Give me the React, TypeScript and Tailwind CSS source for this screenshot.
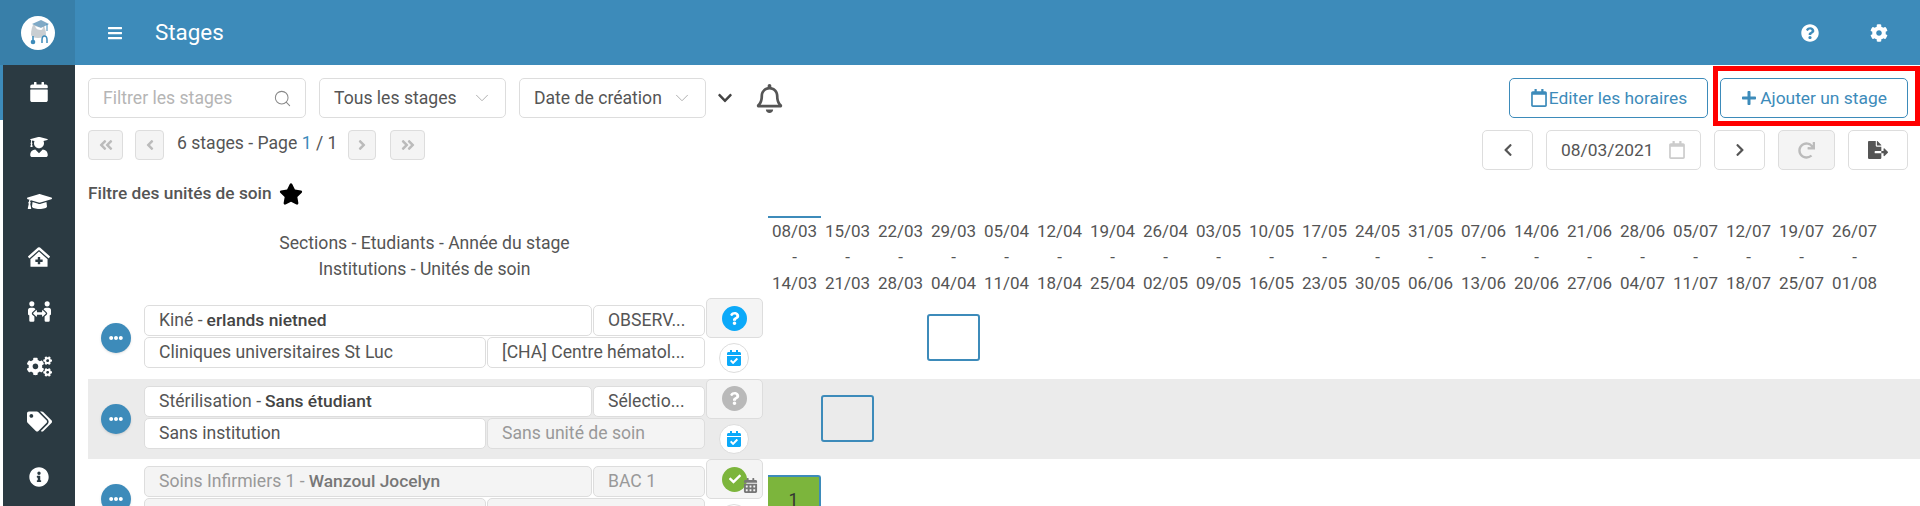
import type { ReactNode } from "react";
import { ChevronDown, Search } from "lucide-react";
import {
  FaAngleDoubleLeft,
  FaAngleDoubleRight,
  FaAngleLeft,
  FaAngleRight,
  FaBars,
  FaCalendar,
  FaCalendarAlt,
  FaCalendarCheck,
  FaCheck,
  FaChevronDown,
  FaChevronLeft,
  FaChevronRight,
  FaClinicMedical,
  FaCog,
  FaCogs,
  FaEllipsisH,
  FaFileExport,
  FaGraduationCap,
  FaInfoCircle,
  FaPeopleArrows,
  FaPlus,
  FaQuestion,
  FaQuestionCircle,
  FaRedo,
  FaRegBell,
  FaRegCalendar,
  FaStar,
  FaTags,
  FaUserGraduate,
} from "react-icons/fa";

const starts = ["08/03", "15/03", "22/03", "29/03", "05/04", "12/04", "19/04", "26/04", "03/05", "10/05", "17/05", "24/05", "31/05", "07/06", "14/06", "21/06", "28/06", "05/07", "12/07", "19/07", "26/07"];
const ends = ["14/03", "21/03", "28/03", "04/04", "11/04", "18/04", "25/04", "02/05", "09/05", "16/05", "23/05", "30/05", "06/06", "13/06", "20/06", "27/06", "04/07", "11/07", "18/07", "25/07", "01/08"];

const sideIcons = [
  { Icon: FaCalendar, size: 20 },
  { Icon: FaUserGraduate, size: 20 },
  { Icon: FaGraduationCap, size: 25 },
  { Icon: FaClinicMedical, size: 22 },
  { Icon: FaPeopleArrows, size: 23 },
  { Icon: FaCogs, size: 25 },
  { Icon: FaTags, size: 25 },
  { Icon: FaInfoCircle, size: 20 },
];

function Logo() {
  return (
    <svg width="36" height="36" viewBox="0 0 36 36">
      <circle cx="18" cy="18" r="17" fill="#fff" />
      <path d="M11 20c0-5 1-9 3-11h9c2 3 3 7 3 11-2 2-4 3-8 3s-6-1-7-3z" fill="#c9ced2" />
      <path d="M12 9l9-4 8 4-8 4z" fill="#7fa9c6" />
      <path d="M15 11c1 3 3 4 6 4 1 0 2-1 2-3l-2 1z" fill="#fff" />
      <path d="M27 9v7" stroke="#3d8bba" strokeWidth="1" />
      <path d="M13 21v4M22 28v-3c0-3 1-4 2.5-4s2.5 1 2.5 4v3" stroke="#3d8bba" strokeWidth="1.5" fill="none" />
      <circle cx="13" cy="27" r="2.3" fill="#3d8bba" />
    </svg>
  );
}

function Select({ label, width }: { label: string; width: string }) {
  return (
    <div className={`${width} h-[40px] rounded-[5px] border border-[#ddd] bg-white pl-[14px] pr-[12px] flex items-center justify-between text-[17.6px] text-[#555]`}>
      <span>{label}</span>
      <ChevronDown size={22} strokeWidth={1} className="text-[#aaa]" />
    </div>
  );
}

function PageButton({ width, children }: { width: string; children: ReactNode }) {
  return (
    <div className={`${width} h-[30px] rounded-[4px] border border-[#ddd] bg-[#f4f4f4] text-[#bbb] flex items-center justify-center`}>
      {children}
    </div>
  );
}

function ToolButton({ width, disabled, children }: { width: string; disabled?: boolean; children: ReactNode }) {
  return (
    <div className={`${width} h-[40px] rounded-[5px] border border-[#ddd] flex items-center justify-center ${disabled ? "bg-[#f4f4f4] text-[#bbb]" : "bg-white text-[#555]"}`}>
      {children}
    </div>
  );
}

function Field({ width, disabled, children }: { width: string; disabled?: boolean; children: ReactNode }) {
  return (
    <div className={`${width} h-[31px] shrink-0 rounded-[5px] border border-[#ddd] pl-[14px] pr-[6px] flex items-center text-[17.6px] whitespace-nowrap overflow-hidden ${disabled ? "bg-[#f4f4f4] text-[#999]" : "bg-white text-[#555]"}`}>
      {children}
    </div>
  );
}

type RowProps = {
  section: string;
  student: string;
  year: string;
  institution: string;
  unit: string;
  status: ReactNode;
  locked?: boolean;
  unitDisabled?: boolean;
  band?: boolean;
  cell: ReactNode;
};

function Row({ section, student, year, institution, unit, status, locked, unitDisabled, band, cell }: RowProps) {
  return (
    <div className={`h-[80.5px] shrink-0 flex ${band ? "bg-[#ebebeb]" : ""}`}>
      <div className="w-[56px] shrink-0 flex justify-center pt-[25px] pr-[1px]">
        <div className="w-[30px] h-[30px] rounded-full bg-[#3d8bba] text-white flex items-center justify-center shadow-sm">
          <FaEllipsisH size={14} />
        </div>
      </div>
      <div className="w-[562px] shrink-0 pt-[7px] flex flex-col gap-[1px]">
        <div className="flex gap-[1px]">
          <Field width="w-[448px]" disabled={locked}>
            <span>{section} - </span>
            <span className={`ml-[4px] text-[17.4px] font-medium ${locked ? "text-[#777]" : "text-[#444]"}`}>{student}</span>
          </Field>
          <Field width="w-[112px]" disabled={locked}>{year}</Field>
        </div>
        <div className="flex gap-[1px]">
          <Field width="w-[342px]" disabled={locked}>{institution}</Field>
          <Field width="w-[218px]" disabled={locked || unitDisabled}>{unit}</Field>
        </div>
      </div>
      <div className="w-[62px] shrink-0 flex flex-col">{status}</div>
      <div className="flex-1 pt-[16px]">{cell}</div>
    </div>
  );
}

function Status({ color, icon, extra }: { color: string; icon: "question" | "check"; extra?: boolean }) {
  return (
    <>
      <div className="relative w-[57px] h-[40px] rounded-[5px] border border-[#ddd] bg-[#f4f4f4] flex items-center justify-center shrink-0">
        <div className={`w-[25px] h-[25px] rounded-full ${color} text-white flex items-center justify-center`}>
          {icon === "question" ? <FaQuestion size={13} /> : <FaCheck size={12} />}
        </div>
        {extra && <FaCalendarAlt size={15} className="absolute left-[36px] top-[18px] text-[#777]" />}
      </div>
      <div className="w-[30px] h-[30px] ml-[13px] mt-[5px] rounded-full border border-[#ddd] bg-white text-[#0ba9f9] flex items-center justify-center shrink-0">
        <FaCalendarCheck size={16} />
      </div>
    </>
  );
}

export default function App() {
  return (
    <div className="w-[1920px] h-[506px] overflow-hidden bg-white relative flex flex-col font-['Roboto',sans-serif] text-[#555]">
      <header className="h-[65px] shrink-0 bg-[#3d8bba] text-white flex items-center">
        <div className="w-[75px] h-full bg-[#387fa9] flex items-center justify-center">
          <Logo />
        </div>
        <FaBars size={16} className="ml-[32px]" />
        <h1 className="ml-[32px] text-[22.4px] leading-none">Stages</h1>
        <div className="ml-auto flex items-center gap-[51px] pr-[32px]">
          <FaQuestionCircle size={18} />
          <FaCog size={18} />
        </div>
      </header>

      <div className="flex-1 flex min-h-0">
        <nav className="w-[75px] shrink-0 bg-[#2b3a42] text-white border-l-[3px] border-white flex flex-col">
          {sideIcons.map(({ Icon, size }, i) => (
            <div
              key={i}
              className={`h-[55px] shrink-0 -ml-[3px] pb-[2px] flex items-center justify-center border-l-[3px] ${i === 0 ? "border-[#3d8bba]" : "border-transparent"}`}
            >
              <Icon size={size} />
            </div>
          ))}
        </nav>

        <main className="flex-1 min-w-0 pl-[13px] pt-[13px] flex flex-col">
          <div className="shrink-0 pr-[12px] flex items-start">
            <div className="w-[218px] h-[40px] rounded-[5px] border border-[#ddd] pl-[14px] pr-[13px] flex items-center justify-between text-[17.6px] text-[#b5b5b5]">
              <span>Filtrer les stages</span>
              <Search size={19} strokeWidth={1.3} className="text-[#888]" />
            </div>
            <div className="ml-[13px]"><Select label="Tous les stages" width="w-[187px]" /></div>
            <div className="ml-[13px]"><Select label="Date de création" width="w-[187px]" /></div>
            <div className="ml-[11px] h-[40px] flex items-center"><FaChevronDown size={16} className="text-[#444]" /></div>
            <div className="ml-[22px] h-[40px] flex items-center"><FaRegBell size={29} className="text-[#555]" /></div>
            <div className="ml-auto flex gap-[12px] text-[17.4px] text-[#3d8bba]">
              <div className="w-[199px] h-[40px] rounded-[5px] border border-[#3d8bba] flex items-center justify-center gap-[1px]">
                <FaRegCalendar size={18} />
                <span>Editer les horaires</span>
              </div>
              <div className="w-[188px] h-[40px] rounded-[5px] border border-[#3d8bba] flex items-center justify-center gap-[3px]">
                <FaPlus size={16} />
                <span>Ajouter un stage</span>
              </div>
            </div>
          </div>

          <div className="shrink-0 pr-[12px] mt-[12px] flex items-start">
            <PageButton width="w-[35px]"><FaAngleDoubleLeft size={16} /></PageButton>
            <div className="ml-[12px]"><PageButton width="w-[29px]"><FaAngleLeft size={16} /></PageButton></div>
            <div className="ml-[13px] h-[26px] leading-[26px] text-[17.6px]">
              6 stages - Page <span className="text-[#3d8bba]">1</span> / 1
            </div>
            <div className="ml-[11px]"><PageButton width="w-[28px]"><FaAngleRight size={16} /></PageButton></div>
            <div className="ml-[14px]"><PageButton width="w-[35px]"><FaAngleDoubleRight size={16} /></PageButton></div>
            <div className="ml-auto flex gap-[13px]">
              <ToolButton width="w-[51px]"><FaChevronLeft size={14} /></ToolButton>
              <div className="w-[155px] h-[40px] rounded-[5px] border border-[#ddd] pl-[14px] pr-[14px] flex items-center justify-between text-[17.4px]">
                <span>08/03/2021</span>
                <FaRegCalendar size={18} className="text-[#ccc]" />
              </div>
              <ToolButton width="w-[51px]"><FaChevronRight size={14} /></ToolButton>
              <ToolButton width="w-[57px]" disabled><FaRedo size={17} /></ToolButton>
              <ToolButton width="w-[60px]"><FaFileExport size={20} /></ToolButton>
            </div>
          </div>

          <div className="shrink-0 mt-[11px] h-[26px] flex items-center text-[17.3px] font-medium">
            <span>Filtre des unités de soin</span>
            <FaStar size={24} className="ml-[7px] text-black" />
          </div>

          <div className="mt-[9px] flex h-[77px] shrink-0">
            <div className="w-[680px] shrink-0 pt-[14px] pr-[7px] text-center text-[17.6px] leading-[26px]">
              <div>Sections - Etudiants - Année du stage</div>
              <div>Institutions - Unités de soin</div>
            </div>
            <div className="flex">
              {starts.map((start, i) => (
                <div key={start} className={`w-[53px] text-center text-[17px] leading-[26px] ${i === 0 ? "border-t-2 border-[#3d8bba]" : "border-t-2 border-transparent"}`}>
                  <div>{start}</div>
                  <div>-</div>
                  <div>{ends[i]}</div>
                </div>
              ))}
            </div>
          </div>

          <div className="mt-[5px] flex flex-col">
            <Row
              section="Kiné"
              student="erlands nietned"
              year="OBSERV..."
              institution="Cliniques universitaires St Luc"
              unit="[CHA] Centre hématol..."
              status={<Status color="bg-[#0ba9f9]" icon="question" />}
              cell={<div className="ml-[159px] w-[53px] h-[47px] rounded-[3px] border-2 border-[#3d8bba]" />}
            />
            <Row
              band
              section="Stérilisation"
              student="Sans étudiant"
              year="Sélectio..."
              institution="Sans institution"
              unit="Sans unité de soin"
              unitDisabled
              status={<Status color="bg-[#b9b9b9]" icon="question" />}
              cell={<div className="ml-[53px] w-[53px] h-[47px] rounded-[3px] border-2 border-[#3d8bba]" />}
            />
            <Row
              locked
              section="Soins Infirmiers 1"
              student="Wanzoul Jocelyn"
              year="BAC 1"
              institution=""
              unit=""
              status={<Status color="bg-[#7cb53c]" icon="check" extra />}
              cell={
                <div className="w-[53px] h-[47px] rounded-tr-[3px] border-t-2 border-r-2 border-[#3d8bba] bg-[#7cb53c] text-center text-[#333] text-[17.6px] leading-[46px]">
                  1
                </div>
              }
            />
          </div>
        </main>
      </div>

      {/* zone surlignée autour du bouton */}
      <div className="absolute left-[1713px] top-[66px] w-[207px] h-[60px] border-[5px] border-[#ff0000]" />
    </div>
  );
}
